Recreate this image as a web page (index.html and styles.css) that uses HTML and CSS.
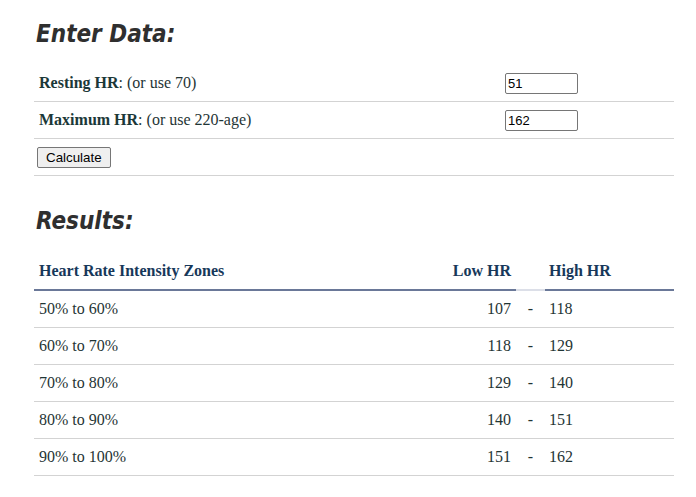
FILE: index.html
```html
<!DOCTYPE html>
<html>
<head>
<meta charset="utf-8">
<link rel="stylesheet" href="styles.css">
</head>
<body>
<div class="page">
  <h2 class="heading">Enter Data:</h2>
  <table class="form-table">
    <tr>
      <td class="label"><b>Resting HR</b>: (or use 70)</td>
      <td class="field"><input class="num" type="text" value="51"></td>
    </tr>
    <tr>
      <td class="label"><b>Maximum HR</b>: (or use 220-age)</td>
      <td class="field"><input class="num" type="text" value="162"></td>
    </tr>
    <tr>
      <td class="btn-cell" colspan="2"><button class="btn">Calculate</button></td>
    </tr>
  </table>

  <h2 class="heading results">Results:</h2>
  <table class="results-table">
    <thead>
      <tr>
        <th class="c-zone">Heart Rate Intensity Zones</th>
        <th class="c-low">Low HR</th>
        <th class="c-dash"></th>
        <th class="c-high">High HR</th>
      </tr>
    </thead>
    <tbody>
      <tr><td class="c-zone">50% to 60%</td><td class="c-low">107</td><td class="c-dash">-</td><td class="c-high">118</td></tr>
      <tr><td class="c-zone">60% to 70%</td><td class="c-low">118</td><td class="c-dash">-</td><td class="c-high">129</td></tr>
      <tr><td class="c-zone">70% to 80%</td><td class="c-low">129</td><td class="c-dash">-</td><td class="c-high">140</td></tr>
      <tr><td class="c-zone">80% to 90%</td><td class="c-low">140</td><td class="c-dash">-</td><td class="c-high">151</td></tr>
      <tr><td class="c-zone">90% to 100%</td><td class="c-low">151</td><td class="c-dash">-</td><td class="c-high">162</td></tr>
    </tbody>
  </table>
</div>
</body>
</html>
```
FILE: styles.css
```css
html, body {
  margin: 0;
  padding: 0;
  background: #ffffff;
}
.page {
  width: 640px;
  margin-left: 34px;
  padding-top: 18px;
  font-family: "Liberation Serif", "Times New Roman", serif;
  font-size: 16px;
  color: #1f3535;
}
.heading {
  font-family: "DejaVu Sans", Verdana, sans-serif;
  font-stretch: condensed;
  font-style: italic;
  font-weight: bold;
  font-size: 24px;
  color: #2f2f2f;
  margin: 0 0 0 2px;
  height: 32px;
  line-height: 32px;
}
.form-table {
  width: 100%;
  border-collapse: collapse;
  margin-top: 15px;
}
.form-table td {
  height: 36px;
  padding: 0 5px;
  border-bottom: 1px solid #d3d3d3;
  vertical-align: middle;
}
.form-table .label b {
  color: #1b3838;
}
.form-table .field {
  width: 164px;
}
.form-table .btn-cell {
  padding-left: 3px;
}
.num {
  box-sizing: border-box;
  width: 73px;
  height: 21px;
  border: 1px solid #767676;
  border-radius: 2px;
  padding: 1px 2px;
  font-family: "Liberation Sans", Arial, sans-serif;
  font-size: 13px;
  color: #000;
}
.btn {
  box-sizing: border-box;
  height: 21px;
  padding: 0 8px;
  border: 1px solid #767676;
  border-radius: 2px;
  background: #efefef;
  font-family: "Liberation Sans", Arial, sans-serif;
  font-size: 13.33px;
  color: #000;
}
.results {
  margin-top: 29px;
}
.results-table {
  width: 100%;
  border-collapse: collapse;
  margin-top: 16px;
}
.results-table th {
  height: 36px;
  padding: 0 5px;
  color: #17385a;
  font-weight: bold;
  border-bottom: 2px solid #6a7898;
  text-align: left;
  vertical-align: middle;
}
.results-table th.c-dash {
  border-bottom: 2px solid #dcdfe8;
}
.results-table td {
  height: 36px;
  padding: 0 5px;
  border-bottom: 1px solid #d3d3d3;
  vertical-align: middle;
}
.results-table .c-low {
  text-align: right;
  width: 70px;
}
.results-table .c-dash {
  text-align: center;
  width: 19px;
  padding: 0 5px;
}
.results-table .c-high {
  width: 120px;
  padding-left: 4px;
}
```
